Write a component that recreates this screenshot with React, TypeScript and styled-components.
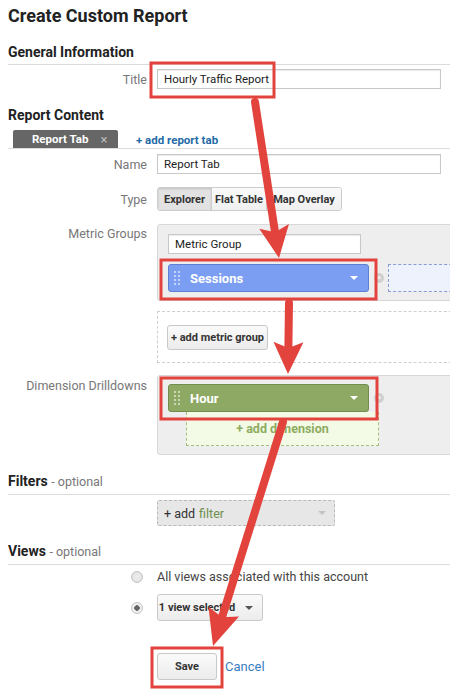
import React from "react";
import styled, { createGlobalStyle } from "styled-components";

const GlobalStyle = createGlobalStyle`
  html, body {
    margin: 0;
    padding: 0;
    background: #fff;
  }
  body {
    font-family: Roboto, "Liberation Sans", Arial, sans-serif;
    color: #333;
    overflow: hidden;
  }
  * { box-sizing: border-box; }
`;

const Page = styled.div`
  position: relative;
  width: 450px;
  height: 696px;
  overflow: hidden;
  padding-left: 8px;
`;

const PageTitle = styled.h1`
  margin: 5px 0 0;
  font-size: 18px;
  line-height: 22px;
  font-weight: 700;
  color: #222;
`;

const SectionTitle = styled.h2<{ $top: number; $rule?: boolean }>`
  margin: ${(p) => p.$top}px 0 0;
  font-size: 14px;
  line-height: 18px;
  font-weight: 700;
  color: #222;
  padding-bottom: ${(p) => (p.$rule ? 3 : 0)}px;
  border-bottom: ${(p) => (p.$rule ? "1px solid #dcdcdc" : "none")};
`;

const Optional = styled.span`
  font-weight: 400;
  font-size: 12.5px;
  color: #777;
`;

const Row = styled.div<{ $top: number; $align?: string }>`
  display: grid;
  grid-template-columns: 149px 1fr;
  margin-top: ${(p) => p.$top}px;
  align-items: ${(p) => p.$align ?? "center"};
`;

const Label = styled.div<{ $pt?: number }>`
  text-align: right;
  padding-right: 10px;
  padding-top: ${(p) => p.$pt ?? 0}px;
  font-size: 12.5px;
  color: #777;
  white-space: nowrap;
`;

const TextBox = styled.div<{ $width: number }>`
  width: ${(p) => p.$width}px;
  height: 20px;
  border: 1px solid #c8c8c8;
  box-shadow: inset 0 1px 1px rgba(0, 0, 0, 0.08);
  background: #fff;
  padding: 0 6px;
  font-size: 11.5px;
  line-height: 18px;
  color: #222;
`;

const TabBar = styled.div`
  display: flex;
  align-items: flex-end;
  margin-top: 6px;
  height: 19px;
  border-bottom: 1px solid #dcdcdc;
`;

const Tab = styled.div`
  margin-left: 5px;
  width: 105px;
  height: 18px;
  background: #666;
  border-radius: 2px 2px 0 0;
  color: #fff;
  font-size: 11.5px;
  font-weight: 700;
  display: flex;
  align-items: center;
  padding-left: 19px;
`;

const TabClose = styled.span`
  margin-left: 12px;
  color: #bbb;
  font-weight: 400;
  font-size: 13px;
`;

const LinkText = styled.span<{ $bold?: boolean }>`
  color: ${(p) => (p.$bold ? "#236aa6" : "#3a7dbf")};
  font-weight: ${(p) => (p.$bold ? 700 : 400)};
  font-size: ${(p) => (p.$bold ? 11.5 : 13)}px;
`;

const AddTab = styled(LinkText)`
  margin-left: 18px;
  align-self: center;
  margin-top: 2px;
`;

const Segmented = styled.div`
  display: flex;
  height: 24px;
  border: 1px solid #ccc;
  border-radius: 3px;
  overflow: hidden;
  width: fit-content;
`;

const Segment = styled.div<{ $w: number; $active?: boolean }>`
  width: ${(p) => p.$w}px;
  display: flex;
  align-items: center;
  justify-content: center;
  font-size: 11px;
  font-weight: 700;
  color: #333;
  background: ${(p) =>
    p.$active ? "#e2e2e2" : "linear-gradient(#fafafa, #f0f0f0)"};
  box-shadow: ${(p) => (p.$active ? "inset 0 1px 2px rgba(0,0,0,0.15)" : "none")};
  & + & {
    border-left: 1px solid #ccc;
  }
`;

const Panel = styled.div<{ $pt: number; $pb: number }>`
  width: 320px;
  background: #eeeeee;
  border: 1px solid #d8d8d8;
  border-radius: 3px;
  padding: ${(p) => p.$pt}px 10px ${(p) => p.$pb}px;
`;

const ChipRow = styled.div<{ $top?: number }>`
  display: flex;
  align-items: center;
  margin-top: ${(p) => p.$top ?? 10}px;
`;

const Chip = styled.div<{ $bg: string; $border: string }>`
  flex-shrink: 0;
  width: 201px;
  height: 28px;
  background: ${(p) => p.$bg};
  border: 1px solid ${(p) => p.$border};
  border-radius: 3px;
  display: flex;
  align-items: center;
  padding-left: 5px;
  color: #fff;
  font-size: 13px;
  font-weight: 700;
`;

const ChipText = styled.span`
  margin-left: 10px;
  flex: 1;
`;

const Caret = styled.span<{ $color: string }>`
  width: 0;
  height: 0;
  border-left: 4px solid transparent;
  border-right: 4px solid transparent;
  border-top: 4px solid ${(p) => p.$color};
  margin-right: ${(p) => (p.$color === "#fff" ? 10 : 8)}px;
`;

const RemoveDot = styled.span`
  flex-shrink: 0;
  width: 10px;
  height: 10px;
  border-radius: 50%;
  background: #cfcfcf;
  margin-left: 5px;
  align-self: flex-start;
  margin-top: 9px;
  color: #fff;
  font-size: 8px;
  line-height: 10px;
  text-align: center;
`;

const DropZone = styled.div`
  flex-shrink: 0;
  margin-left: 4px;
  width: 100px;
  height: 28px;
  background: #eef2fc;
  border: 1px dashed #8a9bd0;
`;

const DashedArea = styled.div`
  width: 320px;
  height: 52px;
  margin-top: 10px;
  border: 1px dashed #cfcfcf;
  background: #fff;
  padding: 13px 9px;
`;

const Button = styled.div<{ $w: number; $h: number }>`
  width: ${(p) => p.$w}px;
  height: ${(p) => p.$h}px;
  background: linear-gradient(#fafafa, #ececec);
  border: 1px solid #c9c9c9;
  border-radius: 3px;
  display: flex;
  align-items: center;
  justify-content: center;
  gap: 10px;
  font-size: 11px;
  font-weight: 700;
  color: #333;
`;

const AddDimension = styled.div`
  margin-left: 18px;
  width: 193px;
  height: 34px;
  background: #f3fbe6;
  border: 1px dashed #a7bd80;
  border-top: none;
  display: flex;
  align-items: center;
  justify-content: center;
  color: #8eab62;
  font-size: 12.5px;
  font-weight: 700;
`;

const FilterBox = styled.div`
  width: 178px;
  height: 26px;
  margin-top: 5px;
  margin-left: 149px;
  background: #e7e7e7;
  border: 1px dashed #b8b8b8;
  border-radius: 2px;
  display: flex;
  align-items: center;
  padding-left: 6px;
  font-size: 12.5px;
  color: #333;
`;

const FilterWord = styled.span`
  color: #6d8f4d;
  margin-left: 4px;
  flex: 1;
`;

const RadioCell = styled.div`
  display: flex;
  justify-content: flex-end;
  padding-right: 14px;
`;

const Radio = styled.span<{ $checked?: boolean }>`
  width: 12px;
  height: 12px;
  border-radius: 50%;
  border: 1px solid #c4c4c4;
  background: radial-gradient(
    circle,
    ${(p) => (p.$checked ? "#666 0 2.5px, #eee 3px" : "#eee 0, #ddd 100%")}
  );
`;

const RadioText = styled.span`
  font-size: 12.5px;
  color: #444;
`;

const SaveRow = styled.div`
  display: flex;
  align-items: center;
  margin-top: 32px;
  margin-left: 149px;
`;

const CancelLink = styled(LinkText)`
  margin-left: 8px;
`;

const Overlay = styled.svg`
  position: absolute;
  left: 0;
  top: 0;
  pointer-events: none;
`;

const Grip = () => (
  <svg width="6" height="16" viewBox="0 0 6 16">
    {[0, 1, 2, 3].map((r) =>
      [0, 1].map((c) => (
        <circle key={`${r}-${c}`} cx={1 + c * 4} cy={2 + r * 4} r="0.9" fill="rgba(255,255,255,0.8)" />
      ))
    )}
  </svg>
);

const RED = "#e3433d";

const arrow = (x1: number, y1: number, x2: number, y2: number, head = 32, half = 15) => {
  const dx = x2 - x1;
  const dy = y2 - y1;
  const len = Math.hypot(dx, dy);
  const ux = dx / len;
  const uy = dy / len;
  const bx = x2 - ux * head;
  const by = y2 - uy * head;
  const px = -uy;
  const py = ux;
  return (
    <g key={`${x1}-${y1}`}>
      <line x1={x1} y1={y1} x2={bx + ux * 4} y2={by + uy * 4} stroke={RED} strokeWidth="8" strokeLinecap="round" />
      <polygon
        points={`${x2},${y2} ${bx + px * half},${by + py * half} ${bx + ux * 6},${by + uy * 6} ${bx - px * half},${by - py * half}`}
        fill={RED}
      />
    </g>
  );
};

const highlights = [
  { x: 151, y: 63, w: 123, h: 34 },
  { x: 161, y: 260, w: 215, h: 39 },
  { x: 161, y: 378, w: 216, h: 41 },
  { x: 152, y: 648, w: 70, h: 39 },
];

const App = () => {
  return (
    <Page>
      <GlobalStyle />
      <PageTitle>Create Custom Report</PageTitle>

      <SectionTitle $top={16} $rule>
        General Information
      </SectionTitle>
      <Row $top={4}>
        <Label>Title</Label>
        <TextBox $width={284}>Hourly Traffic Report</TextBox>
      </Row>

      <SectionTitle $top={17}>Report Content</SectionTitle>
      <TabBar>
        <Tab>
          Report Tab<TabClose>×</TabClose>
        </Tab>
        <AddTab $bold>+ add report tab</AddTab>
      </TabBar>
      <Row $top={5}>
        <Label>Name</Label>
        <TextBox $width={284}>Report Tab</TextBox>
      </Row>
      <Row $top={13}>
        <Label>Type</Label>
        <Segmented>
          <Segment $w={53} $active>
            Explorer
          </Segment>
          <Segment $w={55}>Flat Table</Segment>
          <Segment $w={75}>Map Overlay</Segment>
        </Segmented>
      </Row>

      <Row $top={13} $align="start">
        <Label $pt={2}>Metric Groups</Label>
        <div>
          <Panel $pt={9} $pb={8}>
            <TextBox $width={193}>Metric Group</TextBox>
            <ChipRow>
              <Chip $bg="#7c9ef2" $border="#5f80d2">
                <Grip />
                <ChipText>Sessions</ChipText>
                <Caret $color="#fff" />
              </Chip>
              <RemoveDot>×</RemoveDot>
              <DropZone />
            </ChipRow>
          </Panel>
          <DashedArea>
            <Button $w={101} $h={25}>+ add metric group</Button>
          </DashedArea>
        </div>
      </Row>

      <Row $top={12} $align="start">
        <Label $pt={3}>Dimension Drilldowns</Label>
        <Panel $pt={8} $pb={8}>
          <ChipRow $top={0}>
            <Chip $bg="#8ea964" $border="#738c4c">
              <Grip />
              <ChipText>Hour</ChipText>
              <Caret $color="#fff" />
            </Chip>
            <RemoveDot>×</RemoveDot>
          </ChipRow>
          <AddDimension>+ add dimension</AddDimension>
        </Panel>
      </Row>

      <SectionTitle $top={17} $rule>
        Filters <Optional>- optional</Optional>
      </SectionTitle>
      <FilterBox>
        + add<FilterWord>filter</FilterWord>
        <Caret $color="#c4c4c4" />
      </FilterBox>

      <SectionTitle $top={16} $rule>
        Views <Optional>- optional</Optional>
      </SectionTitle>
      <Row $top={4}>
        <RadioCell>
          <Radio />
        </RadioCell>
        <RadioText>All views associated with this account</RadioText>
      </Row>
      <Row $top={10}>
        <RadioCell>
          <Radio $checked />
        </RadioCell>
        <Button $w={106} $h={27}>
          1 view selected <Caret $color="#555" />
        </Button>
      </Row>

      <SaveRow>
        <Button $w={60} $h={27}>Save</Button>
        <CancelLink>Cancel</CancelLink>
      </SaveRow>

      <Overlay width="450" height="696" viewBox="0 0 450 696">
        {highlights.map((r) => (
          <rect key={r.y} x={r.x} y={r.y} width={r.w} height={r.h} fill="none" stroke={RED} strokeWidth="3" />
        ))}
        {arrow(255, 102, 279, 258)}
        {arrow(289, 303, 288, 374)}
        {arrow(283, 422, 213, 646, 36, 16)}
      </Overlay>
    </Page>
  );
};

export default App;
